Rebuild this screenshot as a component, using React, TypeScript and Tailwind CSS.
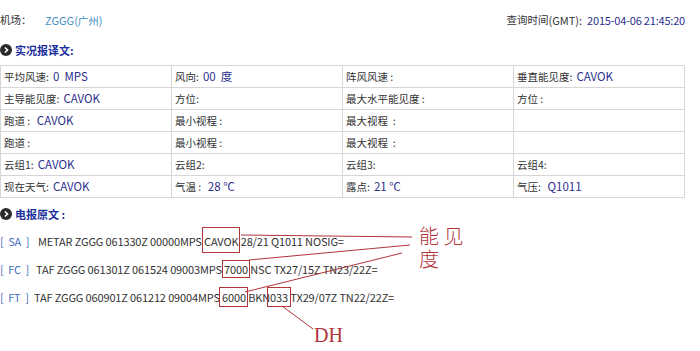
import React from "react";

const font = { fontFamily: '"Noto Sans CJK SC", sans-serif' };

type Cell = { label: string; value?: string };

const rows: Cell[][] = [
  [{ label: "平均风速:", value: "0  MPS" }, { label: "风向:", value: "00  度" }, { label: "阵风风速 :" }, { label: "垂直能见度:", value: "CAVOK" }],
  [{ label: "主导能见度:", value: "CAVOK" }, { label: "方位:" }, { label: "最大水平能见度 :" }, { label: "方位 :" }],
  [{ label: "跑道 :", value: " CAVOK" }, { label: "最小视程 :" }, { label: "最大视程  :" }, { label: "" }],
  [{ label: "跑道 :" }, { label: "最小视程 :" }, { label: "最大视程  :" }, { label: "" }],
  [{ label: "云组1:", value: "CAVOK" }, { label: "云组2:" }, { label: "云组3:" }, { label: "云组4:" }],
  [{ label: "现在天气:", value: "CAVOK" }, { label: "气温 :", value: " 28 ℃" }, { label: "露点:", value: "21 ℃" }, { label: "气压:", value: " Q1011" }],
];

const Heading = ({ text }: { text: string }) => (
  <div className="flex items-center gap-[3px] h-[16px]">
    <span className="w-[12px] h-[12px] rounded-full bg-[#2b2b2b] flex items-center justify-center">
      <svg width="8" height="8" viewBox="0 0 8 8">
        <path d="M3 1.5 L5.5 4 L3 6.5" stroke="#fff" strokeWidth="1.6" fill="none" />
      </svg>
    </span>
    <span className="text-[11px] font-bold text-[#1c2f9c]">{text}</span>
  </div>
);

const Box = ({ children, cls }: { children: React.ReactNode; cls: string }) => (
  <span className="relative">
    {children}
    <span className={`absolute border border-[#b0343a] ${cls}`} />
  </span>
);

export default function App() {
  return (
    <div className="w-[700px] h-[351px] bg-white relative overflow-hidden text-[11px] text-[#333]" style={font}>
      <div className="w-[685px]">
        <div className="flex justify-between items-center h-[16px] mt-[12px]">
          <div className="flex items-center">
            <span className="w-[45px] text-[10.5px]">机场：</span>
            <span className="text-[#3f8fbf]">ZGGG(<span className="text-[10.5px]">广州</span>)</span>
          </div>
          <div className="flex items-center">
            <span className="text-[10.5px]">查询时间</span>(GMT):
            <span className="text-[#2c2f8e] ml-[5px] tracking-[-0.2px] text-[11px]">2015-04-06 21:45:20</span>
          </div>
        </div>

        <div className="mt-[14px]">
          <Heading text="实况报译文:" />
        </div>

        <div className="mt-[7px] border-t border-l border-[#d6d6d6]">
          {rows.map((r, i) => (
            <div key={i} className="grid grid-cols-4">
              {r.map((c, j) => (
                <div key={j} className="h-[22px] border-r border-b border-[#d6d6d6] pl-[3px] flex items-center whitespace-pre">
                  <span className="text-[10.5px]">{c.label}</span>
                  {c.value && <span className="text-[#2c2f8e] ml-[4px] text-[11.5px]">{c.value}</span>}
                </div>
              ))}
            </div>
          ))}
        </div>

        <div className="mt-[8px]">
          <Heading text="电报原文 :" />
        </div>

        <div className="mt-[11px] flex flex-col gap-[12px] whitespace-pre tracking-[-0.15px]">
          <div className="flex h-[16px] items-center">
            <span className="text-[#3f6fc0] w-[38px]">[  SA  ]</span>
            <span>
              METAR ZGGG 061330Z 00000MPS <Box cls="-left-[2px] -right-[2px] -top-[6px] -bottom-[4px]">CAVOK</Box> 28/21 Q1011 NOSIG=
            </span>
          </div>
          <div className="flex h-[16px] items-center">
            <span className="text-[#3f6fc0] w-[36px]">[  FC  ]</span>
            <span>
              TAF ZGGG 061301Z 061524 09003MPS <Box cls="-left-[2px] -right-[2px] -top-[1px] -bottom-[1px]">7000</Box> NSC TX27/15Z TN23/22Z=
            </span>
          </div>
          <div className="flex h-[16px] items-center">
            <span className="text-[#3f6fc0] w-[34px]">[  FT  ]</span>
            <span>
              TAF ZGGG 060901Z 061212 09004MPS <Box cls="-left-[3px] -right-[2px] -top-[2px] -bottom-[2px]">6000</Box> BKN<Box cls="-left-[3px] -right-[3px] -top-[2px] -bottom-[2px]">033</Box> TX29/07Z TN22/22Z=
            </span>
          </div>
        </div>
      </div>

      <svg className="absolute left-0 top-0 pointer-events-none" width="700" height="351">
        <g stroke="#b0343a" strokeWidth="1" fill="none">
          <path d="M241 235 L412 237" />
          <path d="M249 260 L410 245" />
          <path d="M245 292 L402 253" />
          <path d="M282 306 L313 329" />
        </g>
      </svg>
      <div className="absolute left-[419px] top-[224px] text-[#b0343a] text-[20px] leading-[23px] font-light" style={{ fontFamily: '"Noto Sans CJK SC", sans-serif' }}>
        <div>能 见</div>
        <div>度</div>
      </div>
      <div className="absolute left-[314px] top-[324px] text-[#b0343a] text-[20px] leading-[22px]" style={{ fontFamily: '"Liberation Serif", serif' }}>
        DH
      </div>
    </div>
  );
}
